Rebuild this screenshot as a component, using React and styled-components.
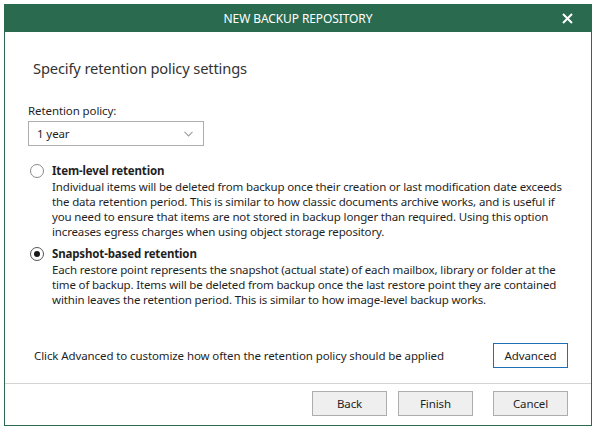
import React, { useState } from "react";
import styled, { createGlobalStyle } from "styled-components";

const GlobalStyle = createGlobalStyle`
  html, body {
    margin: 0;
    padding: 0;
    background: #ffffff;
  }
  body {
    font-family: "Noto Sans", "Open Sans", sans-serif;
    color: #1f1f1f;
  }
`;

const green = "#2a6b4f";

const Page = styled.div`
  padding: 4px;
`;

const Window = styled.div`
  width: 588px;
  height: 422px;
  box-sizing: border-box;
  border: 1px solid ${green};
  border-top: none;
  display: flex;
  flex-direction: column;
`;

const TitleBar = styled.div`
  height: 28px;
  flex-shrink: 0;
  margin: 0 -1px;
  background: ${green};
  color: #ffffff;
  display: flex;
  align-items: center;
  justify-content: center;
  position: relative;
  font-size: 12px;
  letter-spacing: -0.1px;
`;

const CloseButton = styled.button`
  position: absolute;
  right: 17px;
  top: 6px;
  width: 16px;
  height: 16px;
  padding: 0;
  border: none;
  background: transparent;
  display: flex;
  align-items: center;
  justify-content: center;
`;

const Body = styled.div`
  flex: 1;
  min-height: 0;
  padding: 26px 23px 0 23px;
  display: flex;
  flex-direction: column;
`;

const Heading = styled.h1`
  margin: 0 0 0 5px;
  font-size: 14.7px;
  font-weight: 400;
  color: #333333;
  line-height: 20px;
  letter-spacing: -0.15px;
`;

const FieldLabel = styled.div`
  margin-top: 25px;
  font-size: 11.5px;
  line-height: 16px;
  letter-spacing: -0.1px;
`;

const Select = styled.div`
  margin-top: 2px;
  width: 176px;
  height: 25px;
  box-sizing: border-box;
  border: 1px solid #adadad;
  display: flex;
  align-items: center;
  justify-content: space-between;
  padding: 0 10px 0 8px;
  font-size: 11.5px;
  letter-spacing: -0.1px;
`;

const Options = styled.div`
  margin-top: 17px;
  display: flex;
  flex-direction: column;
  gap: 7px;
`;

const Option = styled.div`
  display: grid;
  grid-template-columns: 14px 1fr;
  column-gap: 8px;
  align-items: start;
  margin-left: 2px;
`;

const RadioCircle = styled.span`
  width: 14px;
  height: 14px;
  margin-top: 1px;
  box-sizing: border-box;
  border-radius: 50%;
  border: 1px solid ${({ $checked }) => ($checked ? "#555555" : "#8a8a8a")};
  background: #ffffff;
  display: flex;
  align-items: center;
  justify-content: center;

  &::after {
    content: "";
    width: 6px;
    height: 6px;
    border-radius: 50%;
    background: #1a1a1a;
    display: ${({ $checked }) => ($checked ? "block" : "none")};
  }
`;

const OptionTitle = styled.div`
  font-size: 11.5px;
  font-weight: 700;
  line-height: 16px;
  letter-spacing: -0.15px;
`;

const OptionText = styled.div`
  font-size: 11.5px;
  line-height: 15px;
  letter-spacing: -0.15px;
  white-space: nowrap;

  span {
    display: block;
  }
`;

const AdvancedRow = styled.div`
  margin-top: auto;
  display: flex;
  align-items: center;
  justify-content: space-between;
  padding: 0 0 15px 6px;
  font-size: 11.5px;
  letter-spacing: -0.1px;
`;

const Footer = styled.div`
  box-sizing: border-box;
  flex-shrink: 0;
  border-top: 1px solid #d4d4d4;
  height: 42px;
  display: flex;
  align-items: flex-start;
  justify-content: flex-end;
  padding: 7px 23px 0 0;
  gap: 11px;
`;

const Button = styled.button`
  width: 75px;
  height: 25px;
  box-sizing: border-box;
  border: 1px solid ${({ $focused }) => ($focused ? "#1f6fb5" : "#adadad")};
  background: ${({ $focused }) => ($focused ? "#ffffff" : "#efefef")};
  font-family: inherit;
  font-size: 11.5px;
  letter-spacing: -0.1px;
  color: #1f1f1f;
  padding: 0;
  margin-left: ${({ $gapLeft }) => $gapLeft || 0}px;
`;

const lines1 = [
  "Individual items will be deleted from backup once their creation or last modification date exceeds",
  "the data retention period. This is similar to how classic documents archive works, and is useful if",
  "you need to ensure that items are not stored in backup longer than required. Using this option",
  "increases egress charges when using object storage repository.",
];

const lines2 = [
  "Each restore point represents the snapshot (actual state) of each mailbox, library or folder at the",
  "time of backup. Items will be deleted from backup once the last restore point they are contained",
  "within leaves the retention period. This is similar to how image-level backup works.",
];

const App = () => {
  const [mode, setMode] = useState("snapshot");

  return (
    <Page>
      <GlobalStyle />
      <Window>
        <TitleBar>
          NEW BACKUP REPOSITORY
          <CloseButton aria-label="Close">
            <svg width="11" height="11" viewBox="0 0 11 11">
              <path d="M1 1 L10 10 M10 1 L1 10" stroke="#ffffff" strokeWidth="2" />
            </svg>
          </CloseButton>
        </TitleBar>
        <Body>
          <Heading>Specify retention policy settings</Heading>
          <FieldLabel>Retention policy:</FieldLabel>
          <Select>
            <span>1 year</span>
            <svg width="9" height="6" viewBox="0 0 9 6">
              <path d="M0.5 0.8 L4.5 4.8 L8.5 0.8" stroke="#a0a0a0" strokeWidth="1.2" fill="none" />
            </svg>
          </Select>
          <Options>
            <Option onClick={() => setMode("item")}>
              <RadioCircle $checked={mode === "item"} />
              <div>
                <OptionTitle>Item-level retention</OptionTitle>
                <OptionText>
                  {lines1.map((l) => (
                    <span key={l}>{l}</span>
                  ))}
                </OptionText>
              </div>
            </Option>
            <Option onClick={() => setMode("snapshot")}>
              <RadioCircle $checked={mode === "snapshot"} />
              <div>
                <OptionTitle>Snapshot-based retention</OptionTitle>
                <OptionText>
                  {lines2.map((l) => (
                    <span key={l}>{l}</span>
                  ))}
                </OptionText>
              </div>
            </Option>
          </Options>
          <AdvancedRow>
            <span>Click Advanced to customize how often the retention policy should be applied</span>
            <Button $focused>Advanced</Button>
          </AdvancedRow>
        </Body>
        <Footer>
          <Button>Back</Button>
          <Button>Finish</Button>
          <Button $gapLeft={9}>Cancel</Button>
        </Footer>
      </Window>
    </Page>
  );
};

export default App;
